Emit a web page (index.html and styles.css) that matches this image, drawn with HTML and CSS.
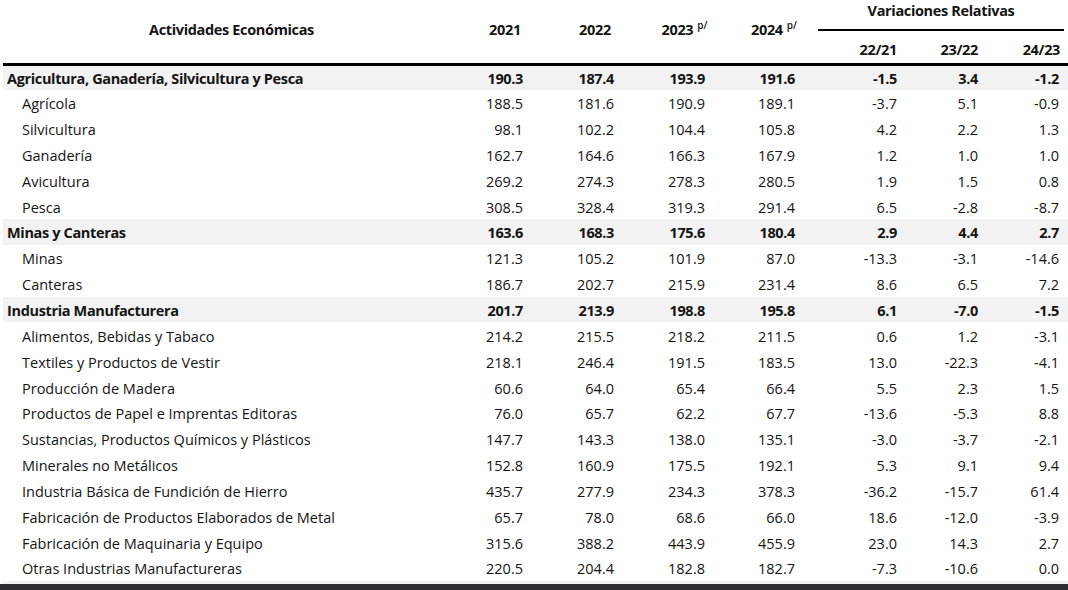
FILE: index.html
```html
<!DOCTYPE html>
<html lang="es">
<head>
<meta charset="utf-8">
<title>Actividades Económicas</title>
<link rel="stylesheet" href="styles.css">
</head>
<body>
<div class="page">
<table class="tbl">
  <colgroup>
    <col class="c-label">
    <col class="c-year"><col class="c-year"><col class="c-year3"><col class="c-year">
    <col class="c-v1"><col class="c-v2"><col class="c-v3">
  </colgroup>
  <thead>
    <tr class="h1">
      <th rowspan="2" class="th-label">Actividades Económicas</th>
      <th rowspan="2" class="th-year">2021</th>
      <th rowspan="2" class="th-year">2022</th>
      <th rowspan="2" class="th-year">2023<sup>p/</sup></th>
      <th rowspan="2" class="th-year">2024<sup>p/</sup></th>
      <th colspan="3" class="th-var"><div class="var-title">Variaciones Relativas</div></th>
    </tr>
    <tr class="h2">
      <th class="th-v">22/21</th>
      <th class="th-v">23/22</th>
      <th class="th-v th-last">24/23</th>
    </tr>
  </thead>
  <tbody>
    <tr class="sec"><td>Agricultura, Ganadería, Silvicultura y Pesca</td><td>190.3</td><td>187.4</td><td>193.9</td><td>191.6</td><td>-1.5</td><td>3.4</td><td>-1.2</td></tr>
    <tr><td>Agrícola</td><td>188.5</td><td>181.6</td><td>190.9</td><td>189.1</td><td>-3.7</td><td>5.1</td><td>-0.9</td></tr>
    <tr><td>Silvicultura</td><td>98.1</td><td>102.2</td><td>104.4</td><td>105.8</td><td>4.2</td><td>2.2</td><td>1.3</td></tr>
    <tr><td>Ganadería</td><td>162.7</td><td>164.6</td><td>166.3</td><td>167.9</td><td>1.2</td><td>1.0</td><td>1.0</td></tr>
    <tr><td>Avicultura</td><td>269.2</td><td>274.3</td><td>278.3</td><td>280.5</td><td>1.9</td><td>1.5</td><td>0.8</td></tr>
    <tr><td>Pesca</td><td>308.5</td><td>328.4</td><td>319.3</td><td>291.4</td><td>6.5</td><td>-2.8</td><td>-8.7</td></tr>
    <tr class="sec"><td>Minas y Canteras</td><td>163.6</td><td>168.3</td><td>175.6</td><td>180.4</td><td>2.9</td><td>4.4</td><td>2.7</td></tr>
    <tr><td>Minas</td><td>121.3</td><td>105.2</td><td>101.9</td><td>87.0</td><td>-13.3</td><td>-3.1</td><td>-14.6</td></tr>
    <tr><td>Canteras</td><td>186.7</td><td>202.7</td><td>215.9</td><td>231.4</td><td>8.6</td><td>6.5</td><td>7.2</td></tr>
    <tr class="sec"><td>Industria Manufacturera</td><td>201.7</td><td>213.9</td><td>198.8</td><td>195.8</td><td>6.1</td><td>-7.0</td><td>-1.5</td></tr>
    <tr><td>Alimentos, Bebidas y Tabaco</td><td>214.2</td><td>215.5</td><td>218.2</td><td>211.5</td><td>0.6</td><td>1.2</td><td>-3.1</td></tr>
    <tr><td>Textiles y Productos de Vestir</td><td>218.1</td><td>246.4</td><td>191.5</td><td>183.5</td><td>13.0</td><td>-22.3</td><td>-4.1</td></tr>
    <tr><td>Producción de Madera</td><td>60.6</td><td>64.0</td><td>65.4</td><td>66.4</td><td>5.5</td><td>2.3</td><td>1.5</td></tr>
    <tr><td>Productos de Papel e Imprentas Editoras</td><td>76.0</td><td>65.7</td><td>62.2</td><td>67.7</td><td>-13.6</td><td>-5.3</td><td>8.8</td></tr>
    <tr><td>Sustancias, Productos Químicos y Plásticos</td><td>147.7</td><td>143.3</td><td>138.0</td><td>135.1</td><td>-3.0</td><td>-3.7</td><td>-2.1</td></tr>
    <tr><td>Minerales no Metálicos</td><td>152.8</td><td>160.9</td><td>175.5</td><td>192.1</td><td>5.3</td><td>9.1</td><td>9.4</td></tr>
    <tr><td>Industria Básica de Fundición de Hierro</td><td>435.7</td><td>277.9</td><td>234.3</td><td>378.3</td><td>-36.2</td><td>-15.7</td><td>61.4</td></tr>
    <tr><td>Fabricación de Productos Elaborados de Metal</td><td>65.7</td><td>78.0</td><td>68.6</td><td>66.0</td><td>18.6</td><td>-12.0</td><td>-3.9</td></tr>
    <tr><td>Fabricación de Maquinaria y Equipo</td><td>315.6</td><td>388.2</td><td>443.9</td><td>455.9</td><td>23.0</td><td>14.3</td><td>2.7</td></tr>
    <tr><td>Otras Industrias Manufactureras</td><td>220.5</td><td>204.4</td><td>182.8</td><td>182.7</td><td>-7.3</td><td>-10.6</td><td>0.0</td></tr>
  </tbody>
</table>
<div class="next-row"></div>
<div class="bottom-bar"></div>
</div>
</body>
</html>
```

FILE: styles.css
```css
html, body {
  margin: 0;
  padding: 0;
  background: #ffffff;
}
body {
  font-family: "Open Sans", "Noto Sans", "Liberation Sans", sans-serif;
  font-size: 14.5px;
  color: #141414;
  width: 1068px;
  height: 590px;
  overflow: hidden;
}
.page {
  display: flex;
  flex-direction: column;
  height: 590px;
  padding-left: 3px;
  box-sizing: border-box;
}
.tbl {
  border-collapse: collapse;
  table-layout: fixed;
  width: 1065px;
  flex: none;
}
.c-label { width: 457px; }
.c-year { width: 90px; }
.c-year3 { width: 89px; }
.c-v1 { width: 97px; }
.c-v2 { width: 81px; }
.c-v3 { width: 71px; }

th, td {
  padding: 0;
  white-space: nowrap;
  line-height: 18px;
}
thead th {
  font-weight: 700;
  letter-spacing: -0.35px;
  vertical-align: middle;
}
thead tr.h1 { height: 32px; }
thead tr.h2 { height: 32px; }
thead tr.h2 th { border-bottom: 3px solid #000; }
.th-label, .th-year {
  text-align: center;
  border-bottom: 3px solid #000;
  padding-bottom: 2px;
}
.th-year sup {
  font-size: 10px;
  font-weight: 600;
  letter-spacing: 0;
  vertical-align: 6px;
  line-height: 0;
  margin-left: 4px;
}
.th-var {
  vertical-align: top;
  padding: 0;
}
.var-title {
  text-align: center;
  margin-right: 4px;
  margin-left: -1px;
  padding-top: 2px;
  height: 27px;
  border-bottom: 2px solid #000;
  box-sizing: content-box;
}
.th-v {
  text-align: right;
  padding-right: 19px;
  padding-top: 5px;
}
.th-v.th-last { padding-right: 8px; }

tbody tr { height: 25.85px; }
tbody td {
  text-align: right;
  vertical-align: middle;
  padding-top: 3px;
}
tbody td:first-child {
  text-align: left;
  padding-left: 19px;
}
tbody td:nth-child(2) { padding-right: 27px; }
tbody td:nth-child(3) { padding-right: 26px; }
tbody td:nth-child(4) { padding-right: 24px; }
tbody td:nth-child(5) { padding-right: 24px; }
tbody td:nth-child(6) { padding-right: 19px; }
tbody td:nth-child(7) { padding-right: 19px; }
tbody td:nth-child(8) { padding-right: 9px; }

tbody tr.sec {
  background: #f2f2f2;
  font-weight: 700;
  letter-spacing: -0.35px;
}
tbody tr.sec td:first-child { padding-left: 4px; }

.next-row {
  height: 3px;
  background: #f0f0f0;
  flex: none;
}
.bottom-bar {
  flex: 1;
  background: #2b2f34;
  margin-left: -3px;
}
```
